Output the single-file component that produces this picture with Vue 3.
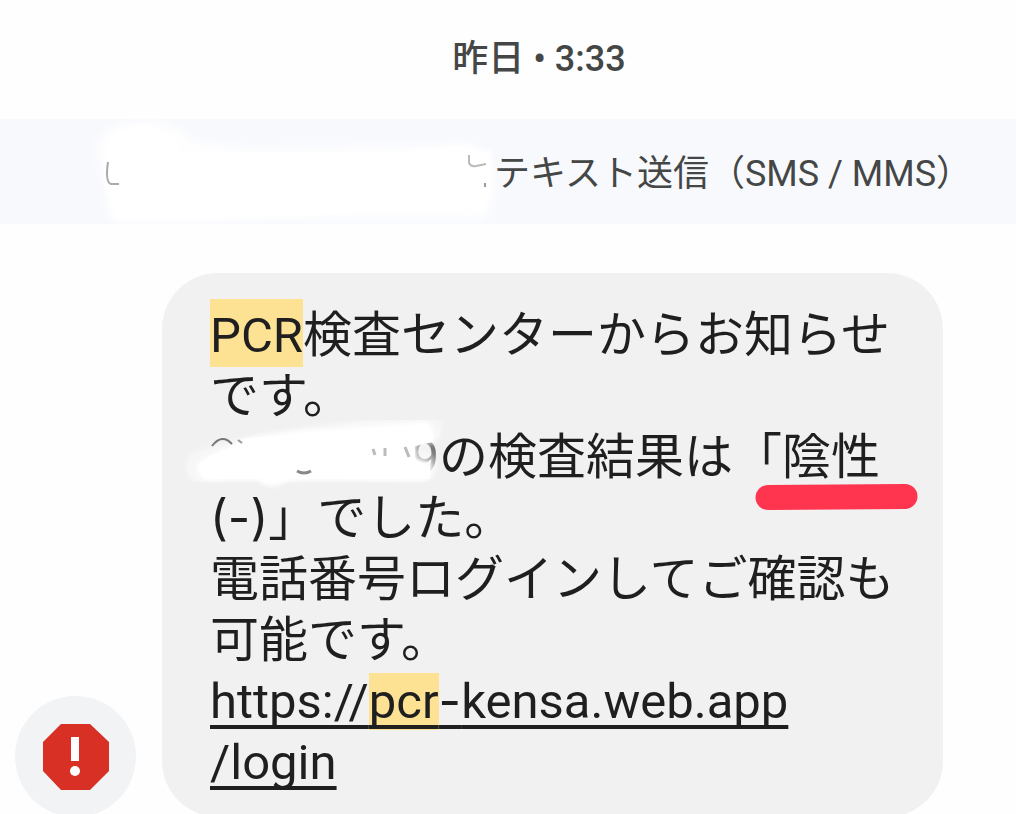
<script setup>
const sender = {
  date: '昨日 • 3:33',
  channel: 'とテキスト送信（SMS / MMS）',
}
</script>

<template>
  <main class="thread">
    <time class="date">{{ sender.date }}</time>

    <div class="banner">
      <p class="banner-text">
        <span class="hidden-number">
          <svg class="banner-smudge" viewBox="70 110 460 120" aria-hidden="true">
            <defs>
              <filter id="soft-wide" x="-20%" y="-30%" width="140%" height="160%">
                <feGaussianBlur stdDeviation="5" />
              </filter>
              <filter id="soft-thin" x="-20%" y="-30%" width="140%" height="160%">
                <feGaussianBlur stdDeviation="2" />
              </filter>
            </defs>
            <g fill="#fff" filter="url(#soft-wide)">
              <path d="M98 150C100 114 180 114 191 142L250 150L400 148L468 144L490 160Q504 190 485 220H112Z" opacity=".9" />
            </g>
            <g fill="#fff" filter="url(#soft-thin)">
              <path d="M108 150C114 122 170 116 182 155H380L464 148L492 152L492 190L485 210L380 212L200 222H118L106 190Z" />
            </g>
            <g fill="none" stroke-width="2">
              <path d="M109 163Q106 183 112 185H120" stroke="#aaa" />
              <path d="M470 156V164Q472 168 477 167L487 165" stroke="#bbb" />
              <path d="M486 184V188" stroke="#999" />
            </g>
          </svg>
        </span>{{ sender.channel }}
      </p>
    </div>

    <section class="message">
      <button class="warning" type="button" aria-label="迷惑メッセージの警告">
        <svg viewBox="0 0 66 66" aria-hidden="true">
          <path d="M18 0H47L66 18V47L47 66H18L0 47V18Z" fill="#d93025" />
          <path d="M28 13H36V37H28Z" fill="#fff" />
          <circle cx="32" cy="47" r="5" fill="#fff" />
        </svg>
      </button>

      <p class="bubble">
        <mark class="tall">PCR</mark>検査センターからお知らせ<br />
        です。<br />
        <span class="hidden-date">9<svg class="date-smudge" viewBox="180 400 280 100" aria-hidden="true">
            <defs>
              <filter id="soft-edge" x="-10%" y="-20%" width="120%" height="140%">
                <feGaussianBlur stdDeviation="2" />
              </filter>
            </defs>
            <path d="M203 467L270 449L425 429M203 467L275 473L420 467" fill="none" stroke="#fff" stroke-linecap="round" stroke-linejoin="round" stroke-width="34" opacity=".45" filter="url(#soft-edge)" />
            <path d="M198 468C196 456 232 450 240 440L300 431L425 422Q434 424 434 439L416 444V458L432 464Q432 480 420 480L330 479Q285 478 282 484Q268 491 256 478L222 479Q198 484 198 468Z" fill="#fff" filter="url(#soft-edge)" />
            <path d="M198 468C200 456 232 451 246 438L425 425Q434 427 433 442L415 446V460L430 466V479H206Z" fill="#fff" />
            <g fill="none" stroke="#999" stroke-width="2">
              <path d="M212 446Q222 433 232 444" stroke="#777" />
              <path d="M238 440L242 443" />
              <path d="M297 471Q304 475 311 471" stroke="#888" stroke-width="3" />
              <path d="M373 449L375 455M385 448V456M405 447L409 457" stroke="#bbb" stroke-width="3" />
            </g>
          </svg></span>の検査結果は<span class="marked">「陰性<svg class="red-line" viewBox="0 0 163 26" aria-hidden="true"><path d="M13 13.5L150 12.5" stroke="#ff344e" stroke-width="25" stroke-linecap="round" /></svg></span><br />
        <span class="wide">(-)</span>」でした。<br />
        電話番号ログインしてご確認も<br />
        可能です。<br />
        <a href="#login">https://<mark>pcr</mark><span class="wide">-</span>kensa.web.app<br />/login</a>
      </p>
    </section>
  </main>
</template>

<style>
body {
  margin: 0;
  background: #fefefe;
}
</style>

<style scoped>
.thread {
  height: 100vh;
  overflow: hidden;
  color: #444746;
  font-family: Roboto, "Noto Sans CJK JP", sans-serif;
  font-size: 36px;
}

.date {
  display: block;
  box-sizing: border-box;
  padding: 38px 0 39px 62px;
  font-weight: 500;
  line-height: 42px;
  text-align: center;
}

.banner {
  padding: 34px 0 29px 62px;
  background: #f8f9fd;
  text-align: center;
}

.banner-text {
  margin: 0;
  line-height: 42px;
  white-space: nowrap;
}

.hidden-number {
  position: relative;
  display: inline-block;
  width: 352px;
  height: 1px;
}

.banner-smudge {
  position: absolute;
  left: -37px;
  bottom: -43px;
  width: 460px;
  height: 120px;
}

.message {
  display: flex;
  align-items: flex-end;
  gap: 26px;
  padding: 49px 73px 0 15px;
}

.warning {
  display: flex;
  flex: none;
  align-items: center;
  justify-content: center;
  width: 121px;
  height: 121px;
  padding: 0;
  border: 0;
  border-radius: 50%;
  background: #f1f3f4;
}

.warning svg {
  width: 66px;
  height: 66px;
}

.bubble {
  flex: 1;
  min-width: 0;
  margin: 0;
  padding: 32px 0 24px 48px;
  border-radius: 56px;
  background: #f1f1f1;
  color: #1f1f1f;
  font-size: 49px;
  line-height: 61px;
  white-space: nowrap;
}

mark {
  background: #fee293;
  color: inherit;
}

.tall {
  padding: 8px 0 3px;
}

.wide {
  font-family: Inter, sans-serif;
  line-height: 1;
}

.hidden-date {
  position: relative;
  display: inline-block;
  width: 229px;
  color: #777;
  text-align: right;
}

.date-smudge {
  position: absolute;
  left: -30px;
  top: -27px;
  width: 280px;
  height: 100px;
}

.marked {
  position: relative;
}

.red-line {
  position: absolute;
  left: 22px;
  top: 55px;
  width: 163px;
  height: 26px;
}

a {
  color: inherit;
  text-decoration: underline;
  text-decoration-thickness: 4px;
  text-decoration-skip-ink: none;
  text-underline-offset: 7px;
}
</style>
